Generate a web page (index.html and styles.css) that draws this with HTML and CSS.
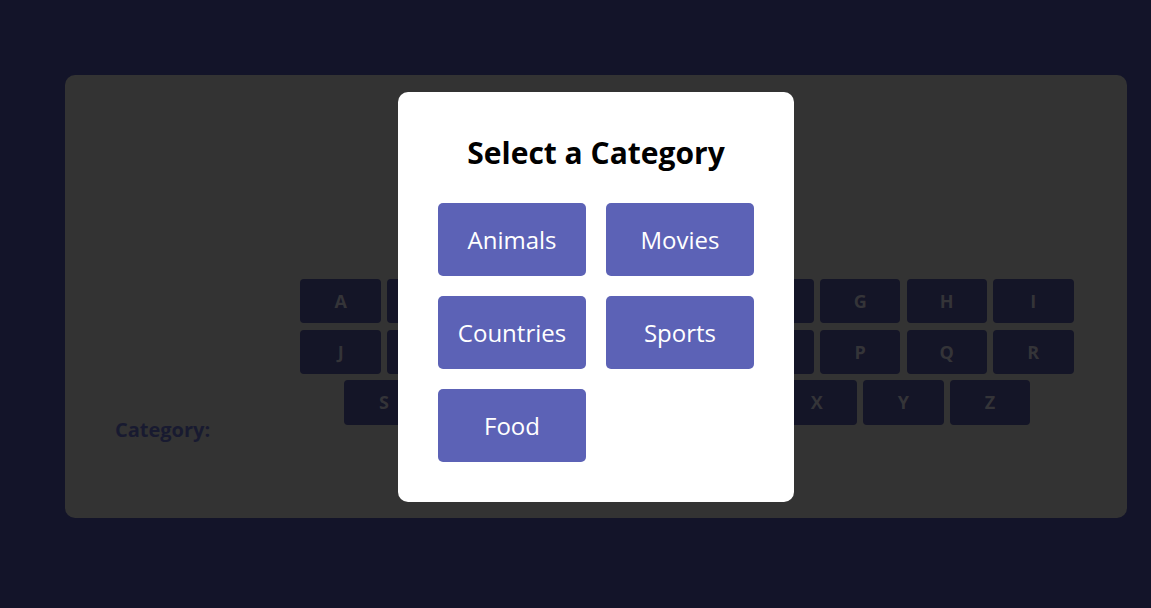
FILE: index.html
```html
<!DOCTYPE html>
<html lang="en">
<head>
<meta charset="utf-8">
<title>Hangman</title>
<link rel="stylesheet" href="styles.css">
</head>
<body>
<main class="page">
  <section class="card">
    <div class="game">
      <div class="left">
        <p class="category">Category:</p>
      </div>
      <div class="keyboard">
        <button class="key">A</button><button class="key">B</button><button class="key">C</button><button class="key">D</button><button class="key">E</button><button class="key">F</button><button class="key">G</button><button class="key">H</button><button class="key">I</button>
        <button class="key">J</button><button class="key">K</button><button class="key">L</button><button class="key">M</button><button class="key">N</button><button class="key">O</button><button class="key">P</button><button class="key">Q</button><button class="key">R</button>
        <button class="key">S</button><button class="key">T</button><button class="key">U</button><button class="key">V</button><button class="key">W</button><button class="key">X</button><button class="key">Y</button><button class="key">Z</button>
      </div>
    </div>
    <div class="overlay">
      <div class="modal">
        <h2 class="modal-title">Select a Category</h2>
        <div class="choices">
          <button class="choice">Animals</button>
          <button class="choice">Movies</button>
          <button class="choice">Countries</button>
          <button class="choice">Sports</button>
          <button class="choice">Food</button>
        </div>
      </div>
    </div>
  </section>
</main>
</body>
</html>
```

FILE: styles.css
```css
html, body {
  margin: 0;
  padding: 0;
  background: #131429;
  font-family: "Open Sans", "Noto Sans", sans-serif;
  height: 100%;
}

.page {
  padding: 75px 24px 0 65px;
}

.card {
  position: relative;
  background: #333333;
  border-radius: 10px;
  height: 443px;
  box-sizing: border-box;
  padding: 0 50px;
}

.game {
  display: flex;
  justify-content: space-between;
  align-items: flex-start;
}

.left {
  padding-top: 345px;
}

.category {
  margin: 0;
  font-size: 20px;
  font-weight: 700;
  color: #181a30;
  line-height: 1;
}

.keyboard {
  margin-top: 201px;
  width: 780px;
  display: flex;
  flex-wrap: wrap;
  justify-content: center;
}

.key {
  width: 80.4px;
  height: 44.4px;
  margin: 3.1px;
  border: none;
  border-radius: 4px;
  background: #141527;
  color: #343438;
  font-family: "Open Sans", sans-serif;
  font-weight: 700;
  font-size: 18px;
  padding: 0;
}

.overlay {
  position: absolute;
  inset: 0;
  display: flex;
  align-items: center;
  justify-content: center;
}

.modal {
  background: #ffffff;
  border-radius: 10px;
  width: 396px;
  box-sizing: border-box;
  padding: 40px;
}

.modal-title {
  margin: 0 0 30px;
  text-align: center;
  font-size: 30px;
  font-weight: 700;
  color: #000;
  line-height: 41px;
}

.choices {
  display: grid;
  grid-template-columns: 148px 148px;
  gap: 20px;
}

.choice {
  height: 73px;
  border: none;
  border-radius: 5px;
  background: #5c62b6;
  color: #fff;
  font-family: "Open Sans", sans-serif;
  font-size: 24px;
  padding: 0;
}
```
